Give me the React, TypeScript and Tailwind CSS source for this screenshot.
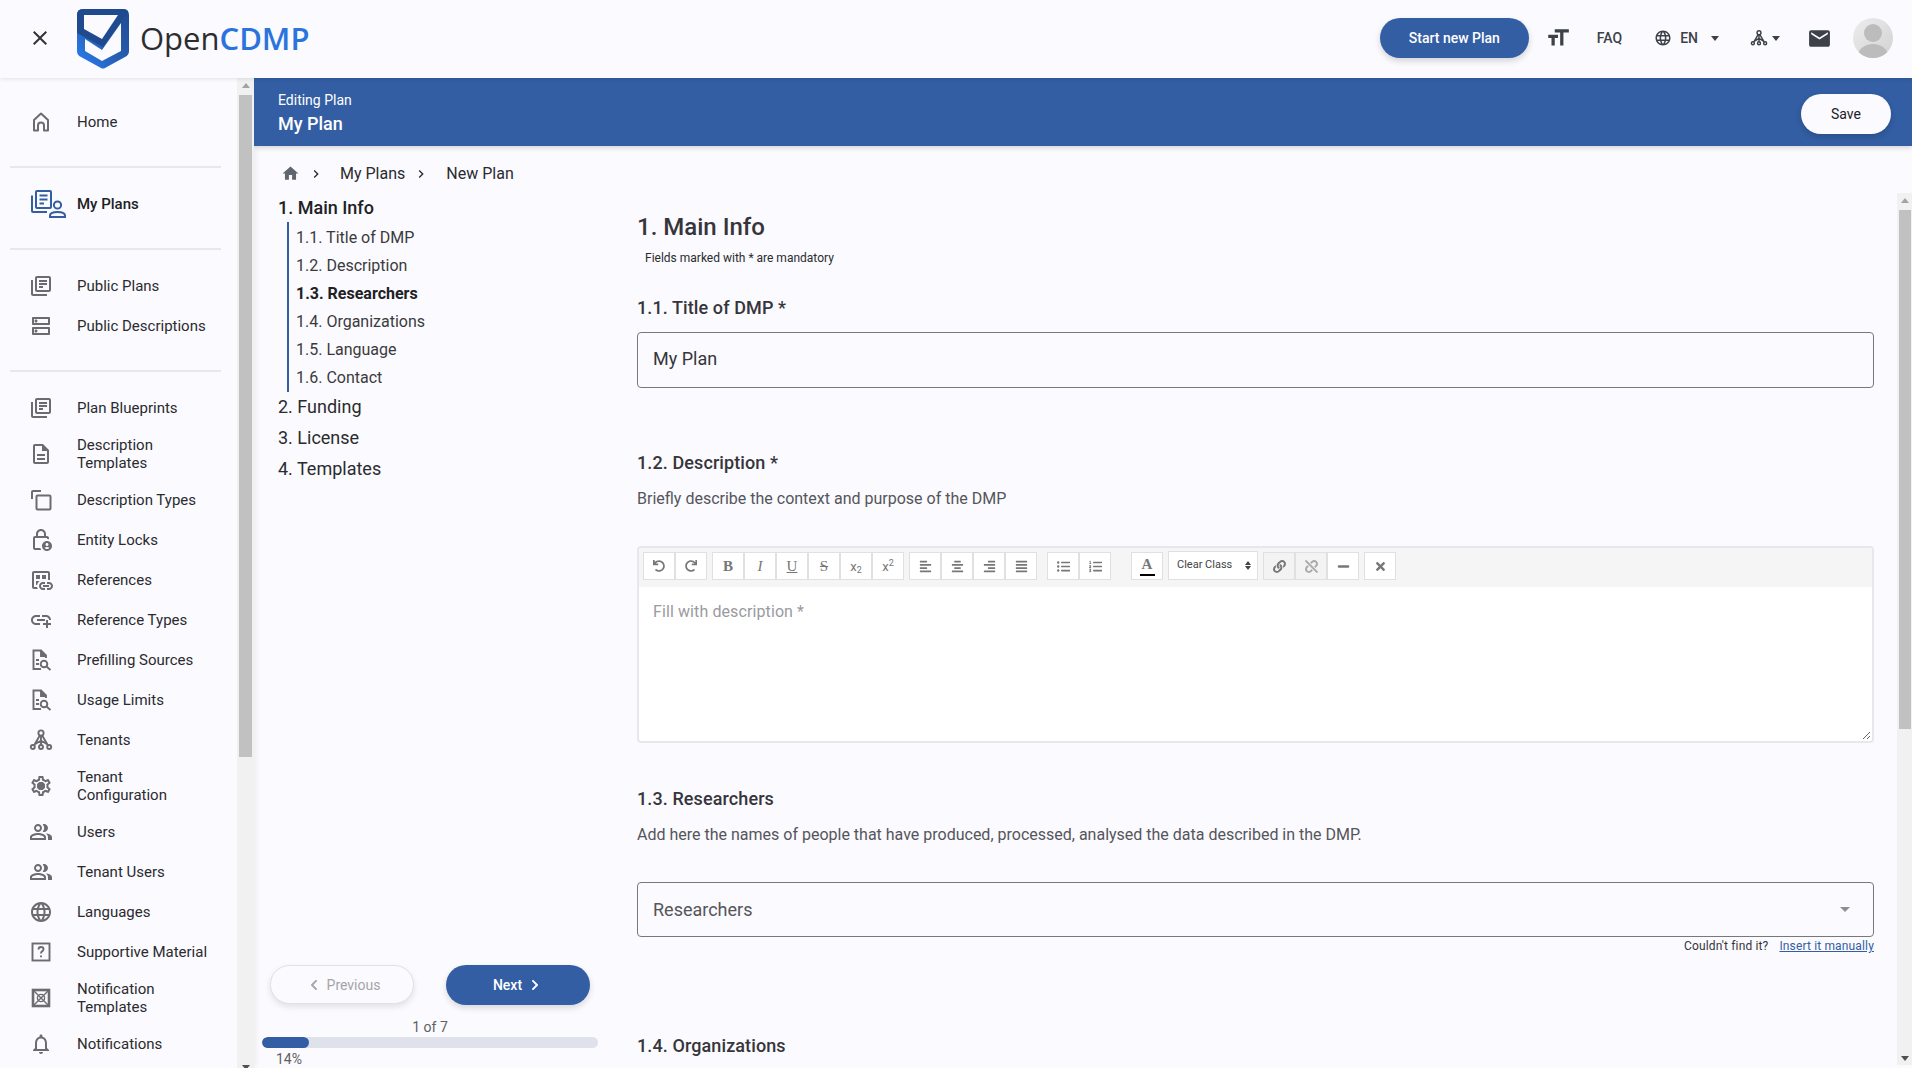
import type { ReactNode } from 'react'
import {
  MdClose,
  MdOutlineLibraryBooks,
  MdOutlineDns,
  MdOutlineDescription,
  MdOutlineLockPerson,
  MdOutlineDatasetLinked,
  MdOutlineAddLink,
  MdOutlineSettings,
  MdOutlinePeopleAlt,
  MdOutlineLanguage,
  MdOutlineNotifications,
  MdEmail,
  MdHome,
  MdChevronRight,
  MdFormatSize,
} from 'react-icons/md'
import {
  FaUndo,
  FaRedo,
  FaAlignLeft,
  FaAlignCenter,
  FaAlignRight,
  FaAlignJustify,
  FaListUl,
  FaListOl,
  FaLink,
  FaUnlink,
  FaMinus,
  FaTimes,
  FaChevronLeft,
  FaChevronRight,
} from 'react-icons/fa'

function Logo() {
  return (
    <svg width="52" height="60" viewBox="0 0 52 60">
      <defs>
        <linearGradient id="shield" x1="0" y1="1" x2="1" y2="0">
          <stop offset="0" stopColor="#2a80f8" />
          <stop offset="0.45" stopColor="#2760b4" />
          <stop offset="1" stopColor="#1f4b8e" />
        </linearGradient>
      </defs>
      <path d="M6 0H46Q52 0 52 6V42Q52 46 48 48L28 59Q26 60 24 59L4 48Q0 46 0 42V6Q0 0 6 0Z" fill="url(#shield)" />
      <path d="M0 6Q0 0 6 0H46Q50 0 51 3L26 38L0 24Z" fill="#1f4b8e" />
      <path d="M7 6H41L25 30L7 20Z" fill="#fafaff" />
      <path d="M8 30L25 41L44 14V42L25 52L8 42Z" fill="#fafaff" />
    </svg>
  )
}

function HomeIcon() {
  return (
    <svg width="24" height="24" viewBox="0 0 24 24" fill="none" stroke="#6c6c6f" strokeWidth="2" strokeLinejoin="round">
      <path d="M5 20.5V10L12 3.5L19 10V20.5H15V15.5A3 3 0 0 0 9 15.5V20.5Z" />
    </svg>
  )
}

function GearIcon() {
  return (
    <span className="relative flex">
      <MdOutlineSettings className="text-[24px] text-[#6c6c6f]" />
      <span className="absolute top-[8px] left-[8px] h-[8px] w-[8px] rounded-full bg-[#6c6c6f]" />
    </span>
  )
}

function TypesIcon() {
  return (
    <svg width="24" height="24" viewBox="0 0 24 24" fill="none" stroke="#6c6c6f" strokeWidth="2">
      <path d="M3 11V4Q3 3 4 3H12" />
      <rect x="7.5" y="7.5" width="14" height="14" rx="1" />
    </svg>
  )
}

function TenantIcon({ size = 24 }: { size?: number }) {
  return (
    <svg width={size} height={size} viewBox="0 0 24 24" fill="none" stroke="currentColor" strokeWidth="1.9">
      <circle cx="12" cy="5" r="2.6" />
      <circle cx="3.8" cy="19" r="2" />
      <circle cx="12" cy="19" r="2" />
      <circle cx="20.2" cy="19" r="2" />
      <path d="M10.8 7.5L5 17.4M12 7.8V17M13.2 7.5L19 17.4M5.5 16.5L12 12.5L18.5 16.5" />
    </svg>
  )
}

function QuickRefIcon() {
  return (
    <svg width="24" height="24" viewBox="0 0 24 24" fill="none" stroke="currentColor" strokeWidth="1.9">
      <path d="M12 21H4.5V2.5H12L17 7.5V10" />
      <path d="M12 2.5V8H17" fill="currentColor" />
      <path d="M7 12H10M7 16H10" />
      <circle cx="15" cy="16" r="3.3" />
      <path d="M17.5 18.5L21.5 22" />
    </svg>
  )
}

function HelpBoxIcon() {
  return (
    <svg width="24" height="24" viewBox="0 0 24 24" fill="none" stroke="currentColor" strokeWidth="1.9">
      <rect x="3.5" y="3.5" width="17" height="17" />
      <path d="M9.5 9.5Q9.5 7 12 7Q14.5 7 14.5 9.3Q14.5 10.6 13 11.4Q12 12 12 13.6" />
      <path d="M12 15.5V17.3" />
    </svg>
  )
}

function NotifTemplateIcon() {
  return (
    <svg width="24" height="24" viewBox="0 0 24 24" fill="none" stroke="currentColor">
      <rect x="4" y="4" width="16" height="16" strokeWidth="2.6" />
      <path d="M4 4L20 20M20 4L4 20" strokeWidth="1.4" />
      <circle cx="12" cy="12" r="3.6" strokeWidth="1.4" />
    </svg>
  )
}

function MyPlansIcon() {
  return (
    <svg width="36" height="28" viewBox="0 0 36 28" fill="none" stroke="#335ea3" strokeWidth="2">
      <rect x="6" y="1" width="15" height="17" rx="1" />
      <path d="M2 5.5V21Q2 22 3 22H17" />
      <path d="M9.5 5.5H17.5M9.5 9.5H17.5M9.5 13.5H14" />
      <circle cx="27.5" cy="15" r="3.6" />
      <path d="M20 27V25.5Q20 22 27.5 22Q35 22 35 25.5V27Z" />
    </svg>
  )
}

function Avatar() {
  return (
    <svg width="40" height="40" viewBox="0 0 40 40">
      <defs>
        <linearGradient id="avatar" x1="0" y1="0" x2="1" y2="1">
          <stop offset="0" stopColor="#ededed" />
          <stop offset="1" stopColor="#d2d2d2" />
        </linearGradient>
        <clipPath id="avatarClip">
          <circle cx="20" cy="20" r="20" />
        </clipPath>
      </defs>
      <circle cx="20" cy="20" r="20" fill="url(#avatar)" />
      <g clipPath="url(#avatarClip)" fill="#bcbcbc">
        <circle cx="20" cy="15" r="9" />
        <ellipse cx="20" cy="38" rx="15" ry="12" />
      </g>
    </svg>
  )
}

const iconCls = 'text-[24px] text-[#6c6c6f]'

type NavItem = { label: ReactNode; icon: ReactNode }

const publicNav: NavItem[] = [
  { label: 'Public Plans', icon: <MdOutlineLibraryBooks className={iconCls} /> },
  { label: 'Public Descriptions', icon: <MdOutlineDns className={iconCls} /> },
]

const adminNav: NavItem[] = [
  { label: 'Plan Blueprints', icon: <MdOutlineLibraryBooks className={iconCls} /> },
  { label: <>Description<br />Templates</>, icon: <MdOutlineDescription className={iconCls} /> },
  { label: 'Description Types', icon: <TypesIcon /> },
  { label: 'Entity Locks', icon: <MdOutlineLockPerson className={iconCls} /> },
  { label: 'References', icon: <MdOutlineDatasetLinked className={iconCls} /> },
  { label: 'Reference Types', icon: <MdOutlineAddLink className={iconCls} /> },
  { label: 'Prefilling Sources', icon: <span className="text-[#6c6c6f]"><QuickRefIcon /></span> },
  { label: 'Usage Limits', icon: <span className="text-[#6c6c6f]"><QuickRefIcon /></span> },
  { label: 'Tenants', icon: <span className="text-[#6c6c6f]"><TenantIcon /></span> },
  { label: <>Tenant<br />Configuration</>, icon: <GearIcon /> },
  { label: 'Users', icon: <MdOutlinePeopleAlt className={iconCls} /> },
  { label: 'Tenant Users', icon: <MdOutlinePeopleAlt className={iconCls} /> },
  { label: 'Languages', icon: <MdOutlineLanguage className={iconCls} /> },
  { label: 'Supportive Material', icon: <span className="text-[#6c6c6f]"><HelpBoxIcon /></span> },
  { label: <>Notification<br />Templates</>, icon: <span className="text-[#6c6c6f]"><NotifTemplateIcon /></span> },
  { label: 'Notifications', icon: <MdOutlineNotifications className={iconCls} /> },
]

function NavRow({ item }: { item: NavItem }) {
  return (
    <div className="flex min-h-[40px] items-center py-2 text-[15px] leading-[18px] text-[#2b2b2e]">
      <div className="flex w-[77px] shrink-0 pl-[29px]">{item.icon}</div>
      <div>{item.label}</div>
    </div>
  )
}

function Divider({ className }: { className: string }) {
  return <div className={`ml-[10px] h-[2px] w-[211px] bg-[#e8e8ec] ${className}`} />
}

function Sidebar() {
  return (
    <aside className="z-10 flex w-[254px] shrink-0 overflow-hidden shadow-[2px_0_6px_rgba(0,0,0,0.06)]">
      <div className="w-[237px] shrink-0 pt-[24px]">
        <NavRow item={{ label: 'Home', icon: <HomeIcon /> }} />
        <Divider className="mt-[24px]" />
        <div className="mt-[16px] flex min-h-[40px] items-center text-[15px] font-medium text-[#212124]">
          <div className="flex w-[77px] shrink-0 pl-[30px]"><MyPlansIcon /></div>
          My Plans
        </div>
        <Divider className="mt-[24px]" />
        <div className="mt-[16px]">
          {publicNav.map((n, i) => <NavRow key={i} item={n} />)}
        </div>
        <Divider className="mt-[24px]" />
        <div className="mt-[16px]">
          {adminNav.map((n, i) => <NavRow key={i} item={n} />)}
        </div>
      </div>
      <div className="flex w-[17px] flex-col items-center bg-[#f1f1f1]">
        <div className="mt-[5px] h-0 w-0 border-x-[4px] border-b-[5px] border-x-transparent border-b-[#a3a3a3]" />
        <div className="mt-[7px] h-[662px] w-[13px] bg-[#c1c1c1]" />
        <div className="mt-auto mb-[-2px] h-0 w-0 border-x-[4px] border-t-[5px] border-x-transparent border-t-[#505050]" />
      </div>
    </aside>
  )
}

function TopBar() {
  return (
    <header className="z-20 flex h-[78px] shrink-0 items-center bg-[#fafaff] pr-[19px] pb-[2px] pl-[28px] shadow-[0_1px_4px_rgba(0,0,0,0.1)]">
      <MdClose className="text-[24px] text-[#333]" />
      <div className="ml-[25px] mt-[2px]"><Logo /></div>
      <div className="ml-[11px] flex items-baseline text-[31px] leading-none [font-family:'Open_Sans',sans-serif]">
        <span className="text-[#2d2d30]">Open</span>
        <span className="font-semibold text-[#2b74dc]">CDMP</span>
      </div>
      <button type="button" className="ml-auto h-[40px] w-[149px] rounded-full bg-[#335ea3] text-[14px] font-medium text-white shadow-[0_3px_6px_rgba(0,0,0,0.16)]">
        Start new Plan
      </button>
      <MdFormatSize className="ml-[16px] text-[26px] text-[#3d4148]" />
      <span className="ml-[26px] text-[14px] font-medium text-[#3d4148]">FAQ</span>
      <MdOutlineLanguage className="ml-[32px] text-[18px] text-[#3d4148]" />
      <span className="ml-[8px] text-[14px] font-medium text-[#3d4148]">EN</span>
      <span className="ml-[13px] h-0 w-0 border-x-[4.5px] border-t-[5px] border-x-transparent border-t-[#3d4148]" />
      <span className="ml-[31px] text-[#3d4148]"><TenantIcon size={18} /></span>
      <span className="ml-[4px] h-0 w-0 border-x-[4.5px] border-t-[5px] border-x-transparent border-t-[#3d4148]" />
      <MdEmail className="ml-[27px] text-[25px] text-[#3d4148]" />
      <div className="ml-[21px]"><Avatar /></div>
    </header>
  )
}

const subSteps = ['1.1. Title of DMP', '1.2. Description', '1.3. Researchers', '1.4. Organizations', '1.5. Language', '1.6. Contact']

function Stepper() {
  return (
    <div className="flex h-full w-[383px] shrink-0 flex-col">
      <div className="pt-[1px] pl-[24px]">
        <div className="text-[18px] leading-[28px] font-medium text-[#212124]">1. Main Info</div>
        <div className="ml-[9px] border-l-2 border-[#335ea3] pt-[2px] pl-[7px]">
          {subSteps.map((s) => (
            <div key={s} className={`h-[28px] text-[16px] leading-[28px] text-[#3a3a3d] ${s.startsWith('1.3') ? 'font-bold text-[#212124]' : ''}`}>
              {s}
            </div>
          ))}
        </div>
        <div className="-mt-[1px] text-[18px] leading-[31px] text-[#2b2b2e]">2. Funding</div>
        <div className="text-[18px] leading-[31px] text-[#2b2b2e]">3. License</div>
        <div className="text-[18px] leading-[31px] text-[#2b2b2e]">4. Templates</div>
      </div>
      <div className="mt-auto -mb-[1px] pl-[8px]">
        <div className="ml-[8px] flex gap-[32px]">
          <button type="button" className="flex h-[39px] w-[144px] items-center justify-center rounded-full border border-[#e2e2e6] bg-[#fafaff] pt-[1px] pl-[4px] text-[14px] text-[#a5a5a8] shadow-[0_3px_6px_rgba(0,0,0,0.1)]">
            <FaChevronLeft className="text-[12px]" />
            <span className="ml-[7px]">Previous</span>
          </button>
          <button type="button" className="flex h-[40px] w-[144px] items-center justify-center rounded-full bg-[#335ea3] pr-[2px] text-[14px] font-medium text-white shadow-[0_3px_6px_rgba(0,0,0,0.14)]">
            Next
            <FaChevronRight className="ml-[7px] text-[12px]" />
          </button>
        </div>
        <div className="mt-[12px] w-[336px] text-center text-[14px] leading-[20px] text-[#5f5f63]">1 of 7</div>
        <div className="h-[11px] w-[336px] overflow-hidden rounded-full bg-[#dfe2ea]">
          <div className="h-full rounded-full bg-[#335ea3]" style={{ width: '14%' }} />
        </div>
        <div className="mt-[1px] ml-[14px] text-[14px] leading-[20px] text-[#5f5f63]">14%</div>
      </div>
    </div>
  )
}

function ToolButton({ children, muted }: { children: ReactNode; muted?: boolean }) {
  return (
    <span className={`flex h-[28px] w-[32px] items-center justify-center border border-[#e0e0e0] text-[#777] ${muted ? 'bg-[#f3f3f3]' : 'bg-white'}`}>
      {children}
    </span>
  )
}

function Glyph({ children, className }: { children: ReactNode; className?: string }) {
  return <span className={`text-[15px] leading-none [font-family:'Liberation_Serif',serif] ${className ?? ''}`}>{children}</span>
}

function Toolbar() {
  return (
    <div className="flex h-[39px] items-start bg-[#f5f5f5] pt-[4px] pl-[4px] text-[13px]">
      <div className="flex">
        <ToolButton><FaUndo className="text-[12px]" /></ToolButton>
        <ToolButton><FaRedo className="text-[12px]" /></ToolButton>
      </div>
      <div className="ml-[5px] flex">
        <ToolButton><Glyph className="font-bold">B</Glyph></ToolButton>
        <ToolButton><Glyph className="italic">I</Glyph></ToolButton>
        <ToolButton><Glyph className="underline">U</Glyph></ToolButton>
        <ToolButton><Glyph className="line-through">S</Glyph></ToolButton>
        <ToolButton><span className="text-[13px] leading-none">x<sub className="text-[9px]">2</sub></span></ToolButton>
        <ToolButton><span className="text-[13px] leading-none">x<sup className="text-[9px]">2</sup></span></ToolButton>
      </div>
      <div className="ml-[5px] flex">
        <ToolButton><FaAlignLeft /></ToolButton>
        <ToolButton><FaAlignCenter /></ToolButton>
        <ToolButton><FaAlignRight /></ToolButton>
        <ToolButton><FaAlignJustify /></ToolButton>
      </div>
      <div className="ml-[10px] flex">
        <ToolButton><FaListUl /></ToolButton>
        <ToolButton><FaListOl /></ToolButton>
      </div>
      <div className="ml-[20px] flex">
        <span className="flex h-[28px] w-[32px] flex-col items-center justify-center border border-[#e0e0e0] bg-white text-[#777]">
          <Glyph className="font-bold">A</Glyph>
          <span className="mt-[2px] h-[2px] w-[15px] bg-black" />
        </span>
      </div>
      <span className="ml-[5px] flex h-[29px] w-[90px] -translate-y-px items-center border border-[#e0e0e0] bg-white pl-[8px] text-[11px] text-[#444]">
        Clear Class
        <span className="mr-[6px] ml-auto flex flex-col gap-[1px]">
          <span className="h-0 w-0 border-x-[3px] border-b-[4px] border-x-transparent border-b-[#444]" />
          <span className="h-0 w-0 border-x-[3px] border-t-[4px] border-x-transparent border-t-[#444]" />
        </span>
      </span>
      <div className="ml-[5px] flex">
        <ToolButton muted><FaLink /></ToolButton>
        <ToolButton muted><FaUnlink className="text-[#aaa]" /></ToolButton>
        <ToolButton><FaMinus /></ToolButton>
      </div>
      <div className="ml-[5px] flex">
        <ToolButton><FaTimes /></ToolButton>
      </div>
    </div>
  )
}

function FormTitle({ children, className }: { children: ReactNode; className: string }) {
  return <h3 className={`text-[18px] leading-[24px] font-medium tracking-[0.1px] text-[#35353a] ${className}`}>{children}</h3>
}

function Form() {
  return (
    <div className="min-w-0 flex-1 pr-[23px]">
      <h2 className="mt-[18px] text-[24px] leading-[32px] font-medium text-[#35353a]">1. Main Info</h2>
      <p className="mt-[7px] ml-[8px] text-[12px] leading-[16px] text-[#2b2b2e]">Fields marked with * are mandatory</p>
      <FormTitle className="mt-[30px]">1.1. Title of DMP *</FormTitle>
      <div className="mt-[12px] flex h-[56px] items-center rounded-[4px] border border-[#77777c] pb-[3px] pl-[15px] text-[18px] text-[#35353a]">My Plan</div>
      <FormTitle className="mt-[63px]">1.2. Description *</FormTitle>
      <p className="mt-[12px] text-[16px] leading-[24px] text-[#55555a]">Briefly describe the context and purpose of the DMP</p>
      <div className="relative mt-[35px] h-[197px] overflow-hidden rounded-[4px] border-2 border-[#e8e8ec] bg-white">
        <Toolbar />
        <div className="pt-[15px] pl-[14px] text-[16px] leading-[20px] tracking-[0.1px] text-[#9a9a9f]">Fill with description *</div>
        <svg className="absolute right-[1px] bottom-[1px]" width="9" height="9" viewBox="0 0 9 9" stroke="#666" fill="none">
          <path d="M1 8L8 1M5 8L8 5" />
        </svg>
      </div>
      <FormTitle className="mt-[44px]">1.3. Researchers</FormTitle>
      <p className="mt-[12px] text-[16px] leading-[24px] text-[#55555a]">Add here the names of people that have produced, processed, analysed the data described in the DMP.</p>
      <div className="mt-[35px] flex h-[55px] items-center justify-between rounded-[4px] border border-[#77777c] pr-[23px] pl-[15px] text-[18px] text-[#55555a]">
        Researchers
        <span className="h-0 w-0 border-x-[5px] border-t-[5px] border-x-transparent border-t-[#8f8f93]" />
      </div>
      <div className="mt-[1px] flex justify-end gap-[11px] text-[12px] leading-[16px] tracking-[0.15px] text-[#35353a]">
        <span>Couldn't find it?</span>
        <span className="text-[#335ea3] underline">Insert it manually</span>
      </div>
      <FormTitle className="mt-[80px]">1.4. Organizations</FormTitle>
    </div>
  )
}

function Main() {
  return (
    <main className="flex min-w-0 flex-1 flex-col overflow-hidden">
      <div className="z-10 flex h-[68px] shrink-0 items-center justify-between bg-[#335ea3] pr-[21px] pl-[24px] shadow-[0_2px_5px_rgba(0,0,0,0.15)]">
        <div className="mt-[2px]">
          <div className="text-[14px] leading-[20px] text-white">Editing Plan</div>
          <div className="mt-[2px] text-[18px] leading-[24px] font-medium text-white">My Plan</div>
        </div>
        <button type="button" className="mt-[4px] h-[40px] w-[90px] rounded-full bg-[#fafaff] text-[14px] text-[#212124] shadow-[0_3px_6px_rgba(0,0,0,0.16)]">Save</button>
      </div>
      <div className="flex h-[47px] shrink-0 items-center pt-[8px] pl-[27px] text-[16px] text-[#2b2b2e]">
        <MdHome className="text-[19px] text-[#60666e]" />
        <MdChevronRight className="ml-[8px] text-[16px] text-[#2b2b2e]" />
        <span className="ml-[16px]">My Plans</span>
        <MdChevronRight className="ml-[8px] text-[16px] text-[#2b2b2e]" />
        <span className="ml-[17px]">New Plan</span>
      </div>
      <div className="flex min-h-0 flex-1">
        <Stepper />
        <Form />
        <div className="mb-[3px] flex w-[15px] shrink-0 flex-col items-center bg-[#f1f1f1]">
          <div className="mt-[5px] h-0 w-0 border-x-[4px] border-b-[5px] border-x-transparent border-b-[#a3a3a3]" />
          <div className="mt-[7px] h-[519px] w-[12px] bg-[#c1c1c1]" />
          <div className="mt-auto mb-[4px] h-0 w-0 border-x-[4px] border-t-[5px] border-x-transparent border-t-[#505050]" />
        </div>
      </div>
    </main>
  )
}

export default function App() {
  return (
    <div className="flex h-screen flex-col overflow-hidden bg-[#fafaff] [font-family:Roboto,sans-serif]">
      <TopBar />
      <div className="flex min-h-0 flex-1">
        <Sidebar />
        <Main />
      </div>
    </div>
  )
}
